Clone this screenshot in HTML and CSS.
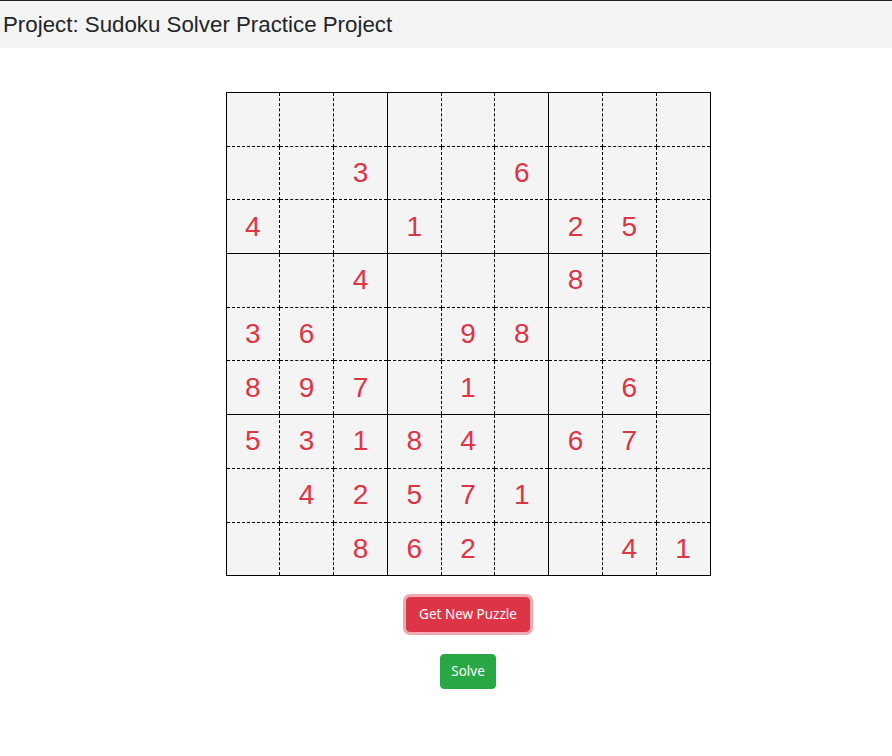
FILE: index.html
```html
<!DOCTYPE html>
<html>
<head>
<meta charset="utf-8">
<title>Sudoku Solver</title>
<link rel="stylesheet" href="styles.css">
</head>
<body>
<header class="topbar">Project: Sudoku Solver Practice Project</header>
<main class="content">
  <table class="board">
    <tr><td></td><td></td><td></td><td></td><td></td><td></td><td></td><td></td><td></td></tr>
    <tr><td></td><td></td><td>3</td><td></td><td></td><td>6</td><td></td><td></td><td></td></tr>
    <tr><td>4</td><td></td><td></td><td>1</td><td></td><td></td><td>2</td><td>5</td><td></td></tr>
    <tr><td></td><td></td><td>4</td><td></td><td></td><td></td><td>8</td><td></td><td></td></tr>
    <tr><td>3</td><td>6</td><td></td><td></td><td>9</td><td>8</td><td></td><td></td><td></td></tr>
    <tr><td>8</td><td>9</td><td>7</td><td></td><td>1</td><td></td><td></td><td>6</td><td></td></tr>
    <tr><td>5</td><td>3</td><td>1</td><td>8</td><td>4</td><td></td><td>6</td><td>7</td><td></td></tr>
    <tr><td></td><td>4</td><td>2</td><td>5</td><td>7</td><td>1</td><td></td><td></td><td></td></tr>
    <tr><td></td><td></td><td>8</td><td>6</td><td>2</td><td></td><td></td><td>4</td><td>1</td></tr>
  </table>
  <button class="btn btn-danger btn-focus">Get New Puzzle</button>
  <button class="btn btn-success">Solve</button>
</main>
</body>
</html>
```
FILE: styles.css
```css
html, body {
  margin: 0;
  padding: 0;
  background: #fff;
}
.topbar {
  border-top: 1px solid #222;
  background: #f4f4f4;
  height: 47px;
  line-height: 47px;
  padding-left: 3px;
  font-family: "Liberation Sans", Arial, sans-serif;
  font-size: 22.3px;
  color: #212529;
}
.content {
  display: flex;
  flex-direction: column;
  align-items: center;
  padding-left: 44px;
  padding-top: 44px;
}
.board {
  border-collapse: collapse;
  table-layout: fixed;
  width: 485px;
  height: 484px;
  border: 1px solid #000;
  background: #f4f4f4;
}
.board tr {
  height: 53.7px;
}
.board td {
  border: 1px dashed #000;
  text-align: center;
  vertical-align: middle;
  padding: 0;
  font-family: "Liberation Sans", Arial, sans-serif;
  font-size: 28px;
  color: #dc3545;
}
.board td:nth-child(3), .board td:nth-child(6) {
  border-right: 1px solid #000;
}
.board tr:nth-child(3) td, .board tr:nth-child(6) td {
  border-bottom: 1px solid #000;
}
.btn {
  font-family: "Noto Sans", "Open Sans", sans-serif;
  font-size: 13.5px;
  line-height: 21px;
  padding: 6px 12px;
  border: 1px solid transparent;
  border-radius: 4px;
  color: #fff;
}
.btn-danger {
  background: #dc3545;
  border-color: #dc3545;
  margin-top: 21px;
}
.btn-focus {
  box-shadow: 0 0 0 3px rgba(225, 83, 97, 0.5);
}
.btn-success {
  background: #28a745;
  border-color: #28a745;
  margin-top: 22px;
  padding: 6px 10px;
}
```
